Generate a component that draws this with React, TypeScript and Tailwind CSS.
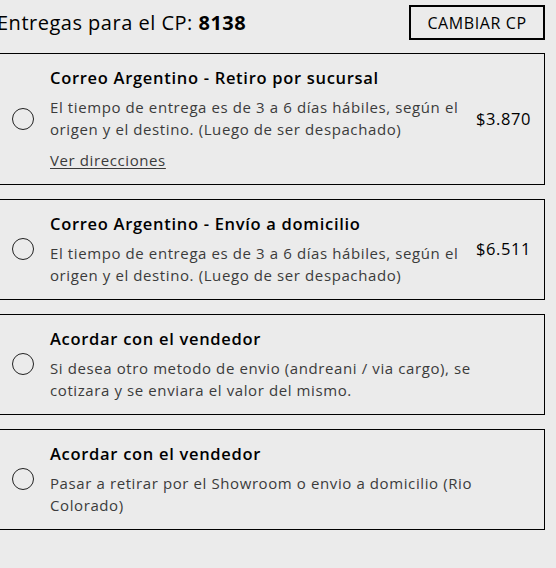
import React from "react";

const font = { fontFamily: '"Open Sans", "Noto Sans", sans-serif' };

function Radio() {
  return <div className="w-[22px] h-[22px] shrink-0 rounded-full border-[1.5px] border-[#222] bg-transparent" />;
}

function Card({ title, lines, price, link }: { title: string; lines: React.ReactNode; price?: string; link?: string }) {
  return (
    <div className="-ml-px flex items-center border border-black pl-[12px] pr-[13px] pt-[12px] pb-[13px]">
      <Radio />
      <div className="ml-[16px] flex-1 min-w-0 whitespace-nowrap">
        <div className="text-[16.5px] leading-[24px] font-semibold tracking-[0.7px] text-black">{title}</div>
        <div className="mt-[6px] text-[15px] leading-[22px] tracking-[0.6px] text-[#3b3b3b]">{lines}</div>
        {link && <div className="mt-[9px] text-[15px] leading-[22px] tracking-[0.6px] text-[#3b3b3b] underline underline-offset-2">{link}</div>}
      </div>
      {price && <div className="ml-[10px] text-[16.5px] leading-[24px] tracking-[0.6px] text-black">{price}</div>}
    </div>
  );
}

export default function App() {
  return (
    <div className="min-h-[568px] w-[556px] overflow-hidden bg-[#ebebeb] pr-[11px]" style={font}>
      <div className="flex items-center justify-between pt-[5px] h-[40px]">
        <div className="-ml-[3px] text-[20px] tracking-[0.5px] text-black whitespace-nowrap">
          Entregas para el CP: <span className="font-bold">8138</span>
        </div>
        <button className="h-[35px] w-[136px] border-2 border-black text-[16px] tracking-[0.6px] text-black">CAMBIAR CP</button>
      </div>
      <div className="mt-[13px] flex flex-col gap-[14px]">
        <Card
          title="Correo Argentino - Retiro por sucursal"
          lines={<>El tiempo de entrega es de 3 a 6 días hábiles, según el<br />origen y el destino. (Luego de ser despachado)</>}
          price="$3.870"
          link="Ver direcciones"
        />
        <Card
          title="Correo Argentino - Envío a domicilio"
          lines={<>El tiempo de entrega es de 3 a 6 días hábiles, según el<br />origen y el destino. (Luego de ser despachado)</>}
          price="$6.511"
        />
        <Card
          title="Acordar con el vendedor"
          lines={<>Si desea otro metodo de envio (andreani / via cargo), se<br />cotizara y se enviara el valor del mismo.</>}
        />
        <Card
          title="Acordar con el vendedor"
          lines={<>Pasar a retirar por el Showroom o envio a domicilio (Rio<br />Colorado)</>}
        />
      </div>
    </div>
  );
}
